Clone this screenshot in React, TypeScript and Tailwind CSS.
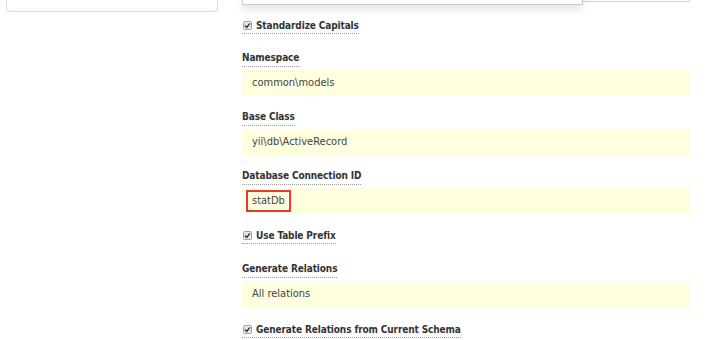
import React from 'react';

function CheckMark() {
  return (
    <svg width="9" height="9" viewBox="0 0 9 9" className="shrink-0">
      <rect x="0.5" y="0.5" width="8" height="8" rx="1" fill="#e6e6e6" stroke="#a0a0a0" />
      <path d="M2 4.6 L3.7 6.4 L7 2.4" fill="none" stroke="#333" strokeWidth="1.4" />
    </svg>
  );
}

function CheckField({ label, className = '' }: { label: string; className?: string }) {
  return (
    <div className={className}>
      <label className="inline-flex h-[17px] items-center border-b border-dotted border-[#999] pl-[1px] text-[10px] font-bold tracking-[-0.12px] text-[#333]">
        <CheckMark />
        <span className="ml-[4px]">{label}</span>
      </label>
    </div>
  );
}

function TextField({ label, value, marked = false, className = '' }: { label: string; value: string; marked?: boolean; className?: string }) {
  return (
    <div className={className}>
      <label className="inline-block h-[17px] border-b border-dotted border-[#999] text-[10px] font-bold leading-[16px] tracking-[-0.12px] text-[#333]">
        {label}
      </label>
      <div className="mt-[3px] flex h-[26px] items-center bg-[#ffffe0] pl-[10px] text-[#444]">
        {marked ? (
          <span className="-ml-[6px] flex h-[22px] items-center border-2 border-[#e53935] px-[4px]">{value}</span>
        ) : (
          value
        )}
      </div>
    </div>
  );
}

export default function App() {
  return (
    <div className="h-[340px] w-[720px] overflow-hidden bg-white font-['DejaVu_Sans_Condensed','DejaVu_Sans',sans-serif] text-[11px]">
      <div className="flex pl-[6px]">
        <div className="h-[12px] w-[212px] rounded-b-[3px] border border-t-0 border-[#ddd]" />

        <div className="relative ml-[24px] w-[448px]">
          <div className="h-[2px] rounded-b-[2px] border border-t-0 border-[#ccc]" />
          <div className="absolute left-0 top-0 h-[5px] w-[341px] border border-t-0 border-[#ccc] bg-white shadow-[0_3px_8px_rgba(0,0,0,0.18)]" />

          <CheckField label="Standardize Capitals" className="mt-[15px] mb-[15px]" />
          <TextField label="Namespace" value="common\models" className="mb-[13px]" />
          <TextField label="Base Class" value="yii\db\ActiveRecord" className="mb-[13px]" />
          <TextField label="Database Connection ID" value="statDb" marked className="mb-[13px]" />
          <CheckField label="Use Table Prefix" className="mb-[16px]" />
          <TextField label="Generate Relations" value="All relations" className="mb-[14px]" />
          <CheckField label="Generate Relations from Current Schema" />
        </div>
      </div>
    </div>
  );
}
